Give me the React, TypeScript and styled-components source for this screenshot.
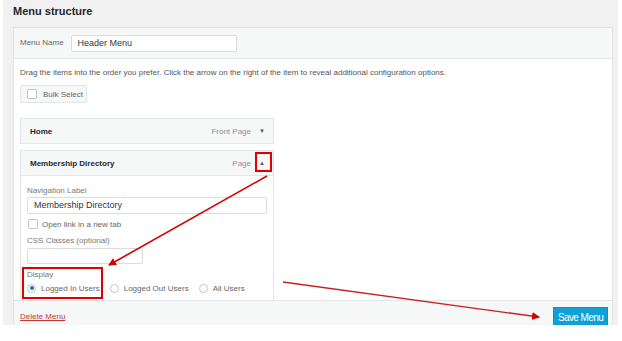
import React from 'react';
import styled, { createGlobalStyle } from 'styled-components';

const GlobalStyle = createGlobalStyle`
  html, body {
    margin: 0;
    padding: 0;
    background: #fff;
  }
  body {
    font-family: "Liberation Sans", Arial, sans-serif;
    color: #444;
  }
`;

const Page = styled.div`
  position: relative;
  width: 622px;
  height: 341px;
  overflow: hidden;
`;

const Frame = styled.div`
  margin-left: 3px;
  width: 615px;
  height: 325px;
  box-sizing: border-box;
  padding: 0 5px 0 10px;
  background: #f1f1f1;
  overflow: hidden;
`;

const Title = styled.h2`
  margin: 0;
  height: 27px;
  padding-top: 4px;
  box-sizing: border-box;
  font-size: 11px;
  line-height: 14px;
  font-weight: 700;
  color: #23282d;
`;

const Panel = styled.div`
  width: 600px;
  box-sizing: border-box;
  background: #fff;
  border: 1px solid #e2e4e7;
`;

const Header = styled.div`
  height: 30px;
  display: flex;
  align-items: center;
  gap: 7px;
  padding-left: 6px;
  background: #f6f7f7;
  border-bottom: 1px solid #e2e4e7;
`;

const Label = styled.span`
  font-size: 8px;
  color: #666;
  line-height: 10px;
`;

const TextInput = styled.div<{ $w: number; $h?: number }>`
  width: ${p => p.$w}px;
  height: ${p => p.$h ?? 17}px;
  box-sizing: border-box;
  border: 1px solid #dcdcde;
  border-radius: 2px;
  background: #fff;
  padding-left: 6px;
  font-size: 9px;
  line-height: ${p => (p.$h ?? 17) - 2}px;
  color: #32373c;
`;

const Body = styled.div`
  padding: 9px 6px 0;
`;

const Hint = styled.p`
  margin: 0;
  font-size: 8px;
  line-height: 10px;
  color: #555;
`;

const BulkButton = styled.div`
  margin-top: 7px;
  width: 67px;
  height: 18px;
  box-sizing: border-box;
  display: flex;
  align-items: center;
  gap: 6px;
  padding-left: 6px;
  background: #f6f7f7;
  border: 1px solid #e2e4e7;
  border-radius: 2px;
  font-size: 8px;
  color: #666;
`;

const Check = styled.span`
  display: inline-block;
  width: 10px;
  height: 10px;
  box-sizing: border-box;
  border: 1px solid #c3c4c7;
  border-radius: 2px;
  background: #fff;
  flex: none;
`;

const ItemList = styled.div`
  margin-top: 15px;
  display: flex;
  flex-direction: column;
  gap: 6px;
`;

const Item = styled.div<{ $open?: boolean }>`
  width: 254px;
  box-sizing: border-box;
  border: 1px solid #e2e4e7;
  border-bottom-width: ${p => (p.$open ? 0 : 1)}px;
  background: #fff;
`;

const ItemHead = styled.div<{ $open?: boolean }>`
  height: 24px;
  display: flex;
  align-items: center;
  padding: 0 5px 0 9px;
  background: #f6f7f7;
  border-bottom: ${p => (p.$open ? '1px solid #e2e4e7' : 'none')};
`;

const ItemName = styled.span`
  font-size: 8px;
  font-weight: 700;
  color: #23282d;
  flex: 1;
`;

const ItemType = styled.span`
  font-size: 8px;
  color: #8c8f94;
`;

const Toggle = styled.span`
  width: 12px;
  margin-left: 5px;
  text-align: center;
  font-size: 6px;
  color: #555;
`;

const ItemBody = styled.div`
  padding: 10px 6px 6px;
  display: flex;
  flex-direction: column;
`;

const FieldLabel = styled.span<{ $mt?: number }>`
  margin-top: ${p => p.$mt ?? 0}px;
  font-size: 8px;
  line-height: 10px;
  color: #777;
`;

const Row = styled.div<{ $mt?: number }>`
  margin-top: ${p => p.$mt ?? 0}px;
  display: flex;
  align-items: center;
  height: 12px;
  font-size: 8px;
  color: #666;
`;

const Radio = styled.span<{ $on?: boolean }>`
  width: 9px;
  height: 9px;
  box-sizing: border-box;
  border-radius: 50%;
  border: 1px solid #c3c4c7;
  background: #fff;
  margin-right: 5px;
  flex: none;
  display: flex;
  align-items: center;
  justify-content: center;
  &::after {
    content: '';
    width: 4px;
    height: 4px;
    border-radius: 50%;
    background: ${p => (p.$on ? '#2271b1' : 'transparent')};
  }
`;

const Option = styled.span`
  display: inline-flex;
  align-items: center;
  margin-right: 10px;
`;

const Footer = styled.div`
  height: 30px;
  display: flex;
  align-items: flex-start;
  justify-content: space-between;
  padding: 6px 4px 0 6px;
  background: #f6f7f7;
  border-top: 1px solid #e2e4e7;
`;

const DeleteLink = styled.a`
  margin-top: 5px;
  font-size: 8px;
  color: #c0393b;
  text-decoration: underline;
`;

const SaveButton = styled.div`
  width: 55px;
  height: 20px;
  box-sizing: border-box;
  background: #10a0d8;
  border: 1px solid #0d8fc4;
  color: #fff;
  font-family: "Liberation Sans Narrow", "Liberation Sans", sans-serif;
  font-size: 10px;
  letter-spacing: -0.6px;
  line-height: 19px;
  text-align: center;
`;

const Annotations = styled.svg`
  position: absolute;
  left: 0;
  top: 0;
  pointer-events: none;
`;

const App: React.FC = () => (
  <Page>
    <GlobalStyle />
    <Frame>
      <Title>Menu structure</Title>
      <Panel>
        <Header>
          <Label>Menu Name</Label>
          <TextInput $w={166}>Header Menu</TextInput>
        </Header>
        <Body>
          <Hint>
            Drag the items into the order you prefer. Click the arrow on the right of the item to reveal additional configuration options.
          </Hint>
          <BulkButton>
            <Check />
            Bulk Select
          </BulkButton>
          <ItemList>
            <Item>
              <ItemHead>
                <ItemName>Home</ItemName>
                <ItemType>Front Page</ItemType>
                <Toggle>▼</Toggle>
              </ItemHead>
            </Item>
            <Item $open>
              <ItemHead $open>
                <ItemName>Membership Directory</ItemName>
                <ItemType>Page</ItemType>
                <Toggle>▲</Toggle>
              </ItemHead>
              <ItemBody>
                <FieldLabel>Navigation Label</FieldLabel>
                <TextInput $w={240} style={{ marginTop: 1 }}>Membership Directory</TextInput>
                <Row $mt={4}>
                  <Check style={{ marginRight: 4, marginLeft: 1 }} />
                  Open link in a new tab
                </Row>
                <FieldLabel $mt={6}>CSS Classes (optional)</FieldLabel>
                <TextInput $w={116} $h={16} style={{ marginTop: 2 }} />
                <FieldLabel $mt={6}>Display</FieldLabel>
                <Row $mt={2}>
                  <Option><Radio $on />Logged In Users</Option>
                  <Option><Radio />Logged Out Users</Option>
                  <Option><Radio />All Users</Option>
                </Row>
              </ItemBody>
            </Item>
          </ItemList>
        </Body>
        <Footer>
          <DeleteLink>Delete Menu</DeleteLink>
          <SaveButton>Save Menu</SaveButton>
        </Footer>
      </Panel>
    </Frame>
    <Annotations width="622" height="341" viewBox="0 0 622 341">
      <defs>
        <marker id="head" markerWidth="8" markerHeight="8" refX="7" refY="4" orient="auto" markerUnits="userSpaceOnUse">
          <path d="M0,0 L8,4 L0,8 Z" fill="#d40000" />
        </marker>
      </defs>
      <rect x="256" y="153" width="15" height="18" fill="none" stroke="#e00000" strokeWidth="2" />
      <rect x="23" y="268" width="79" height="30" fill="none" stroke="#e00000" strokeWidth="2" />
      <line x1="267" y1="176" x2="109" y2="265" stroke="#d40000" strokeWidth="1.6" markerEnd="url(#head)" />
      <line x1="283" y1="282" x2="539" y2="317" stroke="#cc1f1f" strokeWidth="1.3" markerEnd="url(#head)" />
    </Annotations>
  </Page>
);

export default App;
